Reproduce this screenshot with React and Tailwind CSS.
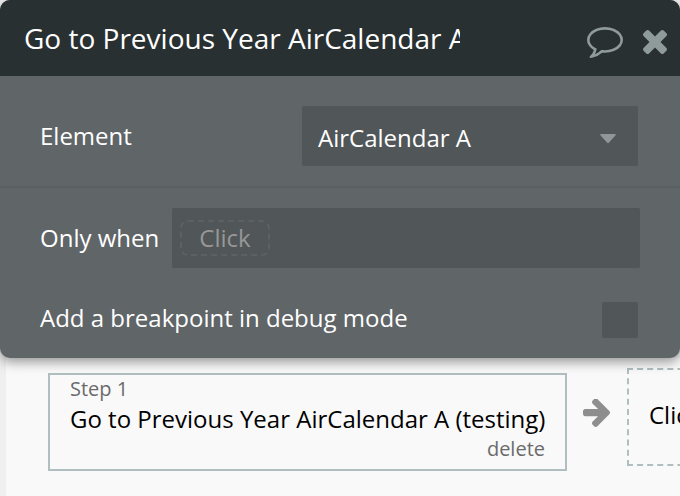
import React from 'react';

const CommentIcon = ({ className }) => (
  <svg viewBox="0 256 1792 1536" className={className} fill="currentColor" aria-hidden="true">
    <path d="M896 384q-204 0-381.5 69.5t-282 187.5-104.5 255q0 112 71.5 213.5t201.5 175.500l87 50-27 96q-24 91-70 172 152-63 275-171l43-38 57 6q69 8 130 8 204 0 381.500-69.500t282-187.500 104.500-255-104.500-255-282-187.500-381.500-69.500zm896 512q0 174-120 321.500t-326 233-450 85.500q-70 0-145-8-198 175-460 242-49 14-114 22h-5q-15 0-27-10.500t-16-27.500v-1q-3-4-.5-12t2-10 4.500-9.500l6-9 7-8.500 8-9q7-8 31-34.500t34.500-38 31-39.500 32.500-51 27-59 26-76q-157-89-247.500-220t-90.500-281q0-174 120-321.500t326-233 450-85.500 450 85.500 326 233 120 321.500z" />
  </svg>
);

const CloseIcon = ({ className }) => (
  <svg viewBox="110 366 1188 1188" className={className} fill="currentColor" aria-hidden="true">
    <path d="M1298 1322q0 40-28 68l-136 136q-28 28-68 28t-68-28l-294-294-294 294q-28 28-68 28t-68-28l-136-136q-28-28-28-68t28-68l294-294-294-294q-28-28-28-68t28-68l136-136q28-28 68-28t68 28l294 294 294-294q28-28 68-28t68 28l136 136q28 28 28 68t-28 68l-294 294 294 294q28 28 28 68z" />
  </svg>
);

const ArrowIcon = ({ className }) => (
  <svg viewBox="0 223 1472 1516" className={className} fill="currentColor" aria-hidden="true">
    <path d="M1472 960q0 54-37 91l-651 651q-39 37-91 37-51 0-90-37l-75-75q-38-38-38-91t38-91l293-293h-704q-52 0-84.500-37.500t-32.500-90.500v-128q0-53 32.500-90.500t84.500-37.500h704l-293-294q-38-36-38-90t38-90l75-75q38-38 90-38 53 0 91 38l651 651q37 35 37 90z" />
  </svg>
);

function PropertyEditor() {
  return (
    <section className="relative z-10 rounded-[10px] bg-[#606568] text-white shadow-[0_4px_12px_rgba(0,0,0,0.4)]">
      {/* Title bar */}
      <header className="flex h-[76px] items-center rounded-t-[10px] bg-[#293032] pl-6 pr-[13px]">
        <input
          aria-label="Action name"
          defaultValue="Go to Previous Year AirCalendar A (testing)"
          className="h-10 min-w-0 flex-1 bg-transparent text-[28px] outline-none"
        />
        <div className="ml-[127px] flex items-center gap-5 text-[#8f9a9b]">
          <button aria-label="Comments" className="pt-2">
            <CommentIcon className="h-[31px] w-9" />
          </button>
          <button aria-label="Close" className="pt-2">
            <CloseIcon className="size-6" />
          </button>
        </div>
      </header>

      {/* Element */}
      <div className="flex items-center justify-between border-b-2 border-[#5a5f62] pb-5 pl-10 pr-[42px] pt-[30px]">
        <label htmlFor="element">Element</label>
        <div className="relative w-[336px]">
          <select
            id="element"
            className="h-[60px] w-full appearance-none rounded-[2px] bg-[#515658] px-4 pt-1 outline-none"
          >
            <option>AirCalendar A</option>
          </select>
          <svg
            viewBox="0 0 16 9"
            className="pointer-events-none absolute right-[22px] top-7 h-[9px] w-4 text-[#919699]"
            fill="currentColor"
            aria-hidden="true"
          >
            <path d="M1 0h14q1.500 0 .6 1.200l-6.600 7.200q-1 1-2 0l-6.600-7.200q-.9-1.200.6-1.200z" />
          </svg>
        </div>
      </div>

      {/* Condition */}
      <div className="flex items-center gap-3 pl-10 pr-10 pt-5">
        <span className="w-[120px] shrink-0 whitespace-nowrap">Only when</span>
        <div className="flex h-[60px] flex-1 items-center rounded-[2px] bg-[#515658] px-2">
          <button className="flex h-9 w-[90px] items-center justify-center rounded-lg border-2 border-dashed border-[#5c6164] text-[#979797]">
            Click
          </button>
        </div>
      </div>

      {/* Breakpoint */}
      <div className="flex items-start justify-between pb-5 pl-10 pr-[42px] pt-[34px]">
        <label htmlFor="breakpoint" className="leading-8">Add a breakpoint in debug mode</label>
        <input
          id="breakpoint"
          type="checkbox"
          className="size-9 appearance-none rounded-[2px] bg-[#515658] checked:bg-[#8f9a9b]"
        />
      </div>
    </section>
  );
}

function WorkflowSteps() {
  return (
    <section className="flex flex-1 items-start overflow-hidden border-l-[6px] border-[#efefef] bg-[#f9f9f9] pl-[42px] pt-[10px]">
      <div className="mt-[5px] flex h-[98px] w-[519px] shrink-0 flex-col border-2 border-[#b0bebf] px-5">
        <span className="text-xl leading-[28px] text-[#6b6b6b]">Step 1</span>
        <span className="whitespace-nowrap leading-[32px] text-black">
          Go to Previous Year AirCalendar A (testing)
        </span>
        <button className="self-end text-xl leading-[28px] text-[#6b6b6b]">delete</button>
      </div>
      <ArrowIcon className="ml-4 mt-[31px] h-7 w-[27px] shrink-0 text-[#8e8e8e]" />
      <button className="ml-[17px] flex h-[98px] shrink-0 items-center whitespace-nowrap border-2 border-dashed border-[#b0bebf] px-5 pb-1 text-black">
        Click here to add an action...
      </button>
    </section>
  );
}

export default function App() {
  return (
    <div className="flex min-h-screen flex-col overflow-hidden bg-[#efefef] font-['Open_Sans',sans-serif] text-2xl">
      <PropertyEditor />
      <WorkflowSteps />
    </div>
  );
}
